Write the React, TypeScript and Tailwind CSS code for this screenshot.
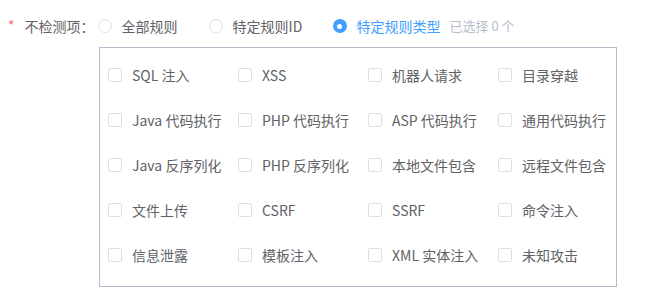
import { useState } from "react";

const ruleTypes = [
  "SQL 注入",
  "XSS",
  "机器人请求",
  "目录穿越",
  "Java 代码执行",
  "PHP 代码执行",
  "ASP 代码执行",
  "通用代码执行",
  "Java 反序列化",
  "PHP 反序列化",
  "本地文件包含",
  "远程文件包含",
  "文件上传",
  "CSRF",
  "SSRF",
  "命令注入",
  "信息泄露",
  "模板注入",
  "XML 实体注入",
  "未知攻击",
];

const modes = ["全部规则", "特定规则ID", "特定规则类型"];

function Radio({ checked }: { checked: boolean }) {
  return checked ? (
    <span className="flex h-[14px] w-[14px] items-center justify-center rounded-full bg-[#409eff]">
      <span className="h-[5px] w-[5px] rounded-full bg-white" />
    </span>
  ) : (
    <span className="h-[14px] w-[14px] rounded-full border border-[#dcdfe6] bg-white" />
  );
}

export default function App() {
  const [mode] = useState(2);

  return (
    <div
      className="h-[308px] w-[650px] bg-white pt-[16px] text-[14px] text-[#606266]"
      style={{ fontFamily: '"Noto Sans CJK SC", "Noto Sans", sans-serif' }}
    >
      <div className="flex h-[20px] items-center pl-[8px]">
        <span className="mr-[10px] mt-[-2px] text-[#f56c6c]">*</span>
        <span className="w-[73px]">不检测项：</span>
        <div className="flex items-center">
          {modes.map((m, i) => (
            <label
              key={m}
              className={
                i === 0
                  ? "flex w-[111px] items-center gap-[10px]"
                  : i === 1
                  ? "flex w-[124px] items-center gap-[10px]"
                  : "flex items-center gap-[10px]"
              }
            >
              <Radio checked={mode === i} />
              <span className={mode === i ? "text-[#409eff]" : ""}>{m}</span>
            </label>
          ))}
          <span className="ml-[9px] text-[13px] text-[#b4bccc]">已选择 0 个</span>
        </div>
      </div>

      <div className="ml-[99px] mt-[11px] w-[518px] border border-[#b4bccc] pb-[21px] pl-[8px] pt-[17px]">
        <div className="grid grid-cols-[130px_130px_130px_1fr] gap-y-[25px]">
          {ruleTypes.map((t) => (
            <label key={t} className="flex h-[20px] items-center gap-[10px] whitespace-nowrap">
              <span className="h-[14px] w-[14px] shrink-0 rounded-[2px] border border-[#dcdfe6] bg-white" />
              <span>{t}</span>
            </label>
          ))}
        </div>
      </div>
    </div>
  );
}
